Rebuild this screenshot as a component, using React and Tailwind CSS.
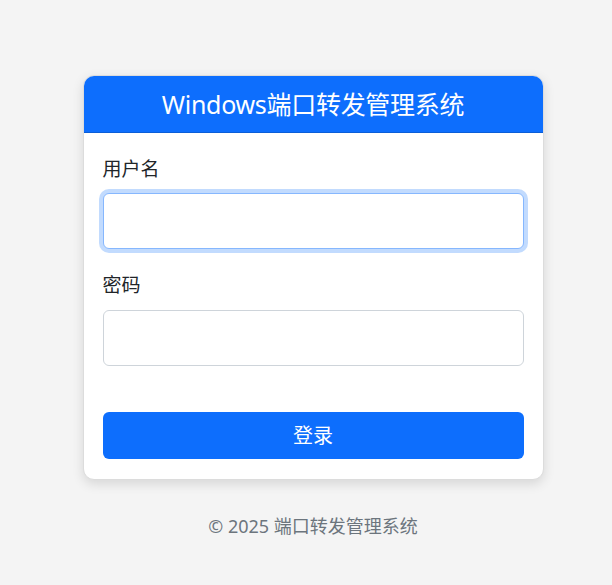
import { useState } from "react"

export default function App() {
  const [username, setUsername] = useState("")
  const [password, setPassword] = useState("")

  return (
    <div
      className="min-h-[585px] w-full bg-[#f4f4f4] flex flex-col items-center pt-[75px] pl-[14px]"
      style={{ fontFamily: '"Noto Sans", "Noto Sans CJK SC", sans-serif' }}
    >
      {/* Card */}
      <div className="w-[461px] bg-white rounded-[11px] border border-[#dcdcdc] shadow-[0_4px_12px_rgba(0,0,0,0.12)] overflow-hidden">
        <div className="h-[57px] bg-[#0d6efd] border-b border-[#0b5ed7] flex items-center justify-center text-white text-[25px] tracking-[-0.3px] leading-none">
          Windows端口转发管理系统
        </div>

        <form className="px-[19px] pt-[21px] pb-[20px]" onSubmit={(e) => e.preventDefault()}>
          <label className="block text-[19px] leading-[30px] text-[#212529] mb-[9px]">用户名</label>
          <input
            value={username}
            onChange={(e) => setUsername(e.target.value)}
            className="block w-full h-[56px] px-3 rounded-[6px] border border-[#86b7fe] shadow-[0_0_0_4px_rgba(13,110,253,0.25)] outline-none bg-white"
          />

          <label className="block text-[19px] leading-[30px] text-[#212529] mt-[21px] mb-[10px]">密码</label>
          <input
            type="password"
            value={password}
            onChange={(e) => setPassword(e.target.value)}
            className="block w-full h-[56px] px-3 rounded-[6px] border border-[#ced4da] outline-none bg-white"
          />

          <button
            type="submit"
            className="mt-[46px] w-full h-[47px] rounded-[6px] bg-[#0d6efd] text-white text-[20px] leading-none"
          >
            登录
          </button>
        </form>
      </div>

      <p className="mt-[32px] text-[18px] leading-[28px] text-[#6c757d]">© 2025 端口转发管理系统</p>
    </div>
  )
}
